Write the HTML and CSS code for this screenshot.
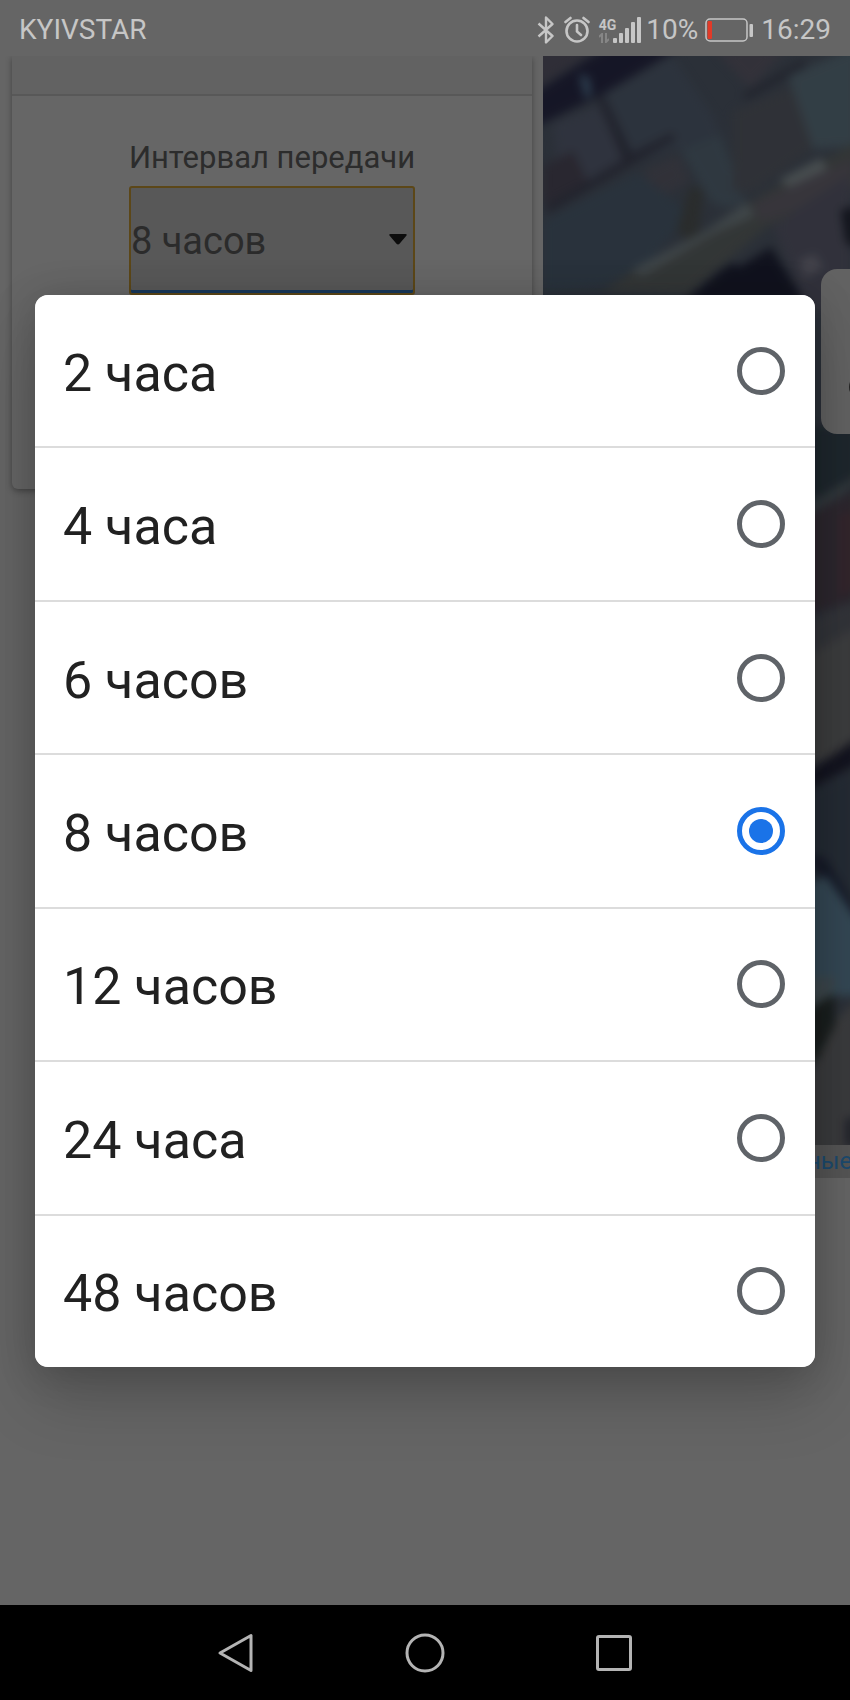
FILE: index.html
```html
<!DOCTYPE html>
<html lang="ru">
<head>
<meta charset="utf-8">
<meta name="viewport" content="width=device-width, initial-scale=1">
<title>Интервал передачи</title>
<link rel="stylesheet" href="styles.css">
</head>
<body>
<header class="status">
  <span class="carrier">KYIVSTAR</span>
  <div class="indicators">
    <svg class="bluetooth" width="18" height="28" viewBox="0 0 18 28" fill="none" stroke="currentColor" stroke-width="2.4" stroke-linejoin="round"><path d="M1.500 7.500 15.500 20 9 26.500V1.500L15.500 8 1.500 20.500"/></svg>
    <svg class="alarm" width="26" height="27" viewBox="0 0 26 27" fill="none" stroke="currentColor" stroke-width="2.600" stroke-linecap="round"><circle cx="13" cy="15" r="10.500"/><path d="M13 9v6.500l4 3.500M1.500 6 6.500 2M24.500 6l-5-4"/></svg>
    <div class="network">
      <span class="network-type">4G</span>
      <svg class="traffic" width="10" height="10" viewBox="0 0 10 10" fill="none" stroke="currentColor" stroke-width="2"><path d="M3 10V1L0 4M7 0v9l3-3"/></svg>
    </div>
    <svg class="signal" width="28" height="28" viewBox="0 0 28 28" fill="currentColor"><rect y="22" width="4" height="5" rx="1"/><rect x="6" y="17" width="4" height="10" rx="1"/><rect x="12" y="12" width="4" height="15" rx="1"/><rect x="18" y="6" width="4" height="21" rx="1"/><rect x="24" y="1" width="4" height="26" rx="1"/></svg>
    <span class="percent">10%</span>
    <svg class="battery" width="48" height="24" viewBox="0 0 48 24"><rect x="1" y="1" width="41" height="22" rx="4" fill="none" stroke="currentColor" stroke-width="1.500"/><rect x="2.500" y="3" width="4.500" height="18" rx="1" fill="#e23a28"/><rect x="44.500" y="6" width="3.500" height="13" rx="1" fill="currentColor"/></svg>
    <time class="clock">16:29</time>
  </div>
</header>

<main class="page">
  <section class="column">
    <form class="panel">
      <div class="panel-head"></div>
      <div class="panel-body">
        <div class="field">
          <label class="field-label" for="interval">Интервал передачи</label>
          <div class="select-wrap">
            <select class="select" id="interval"><option>8 часов</option></select>
            <svg class="caret" width="18" height="11" viewBox="0 0 18 11"><path d="M1.500 0h15c1.500 0 1.500 1 .8 1.800L10.500 9.700c-1 1-2 1-3 0L.7 1.800C0 1 0 0 1.500 0z" fill="#0c0c0c"/></svg>
          </div>
        </div>
      </div>
    </form>
  </section>

  <section class="map">
    <div class="map-view">
      <svg class="satellite" viewBox="0 0 307 1089" preserveAspectRatio="xMaxYMin slice">
        <defs><filter id="soft" x="-5%" y="-5%" width="110%" height="110%" color-interpolation-filters="sRGB"><feGaussianBlur stdDeviation="5"/></filter></defs>
        <rect width="307" height="1089" fill="#2b3038"/>
        <g filter="url(#soft)" opacity=".88">
          <path fill="#302e37" d="M-10-10H60L-10 34z"/>
          <path fill="#131324" d="M-10 38 55-4 65-10H140L60 38-10 72z"/>
          <path fill="#2d3f50" d="M36 18l10 3 3 17-7 5z"/>
          <path fill="#2d343e" d="M57 40 130 0l40 60 20 50-60-18-50 20z"/>
          <path fill="#30343f" d="M10 68 55 50l28 52-40 26L15 112z"/>
          <path fill="#29262f" d="M0 110 30 95l14 30L0 150z"/>
          <path fill="#20212b" d="M54 42l7-3 28 58 40-20 4 6L4 158v-9l76-45z"/>
          <path fill="#323239" d="M100 115l35-16 12 26-34 19z"/>
          <path fill="#29333d" d="M0 165l95-48 52 40-40 48-45 25-62 8z"/>
          <path fill="#303a42" d="M138 95l40-16 24 68-20 5-14-6z"/>
          <path fill="#34323a" d="M170-8h75l-38 40z"/>
          <path fill="#20222b" d="M200 38 260 4l3 6-60 34z"/>
          <path fill="#303237" d="M190 55l62-25 28 55-70 50-20 0z"/>
          <path fill="#344047" d="M245 20l70-30v100l-45 3z"/>
          <path fill="#2a2c2b" d="M147 130l13 4-6 60-20-20z"/>
          <path fill="#343736" d="M60 236l35-25 70-38 60-38 90-50v45l-90 40-80 68z"/>
          <path fill="#42494b" d="M88 214l76-40 40-28 8 14-42 18-70 42z"/>
          <path fill="#4c5253" d="M236 124l42-22 11 19-36 15z"/>
          <path fill="#39363c" d="M210 148l100-46v34l-92 30z"/>
          <path fill="#32323c" d="M230 170l77-50v135h-42z"/>
          <path fill="#46454d" d="M256 204l16-6 8 14-18 10z"/>
          <path fill="#0e0f1b" d="M140 246l36-30 14-9 6 4 32-20 34 55z"/>
          <path fill="#0e1018" d="M298 154l16-4v44l-11-8z"/>
          <path fill="#1d262c" d="M265 370h50v62l-50 12z"/>
          <path fill="#353c3f" d="M265 448l50-29v8l-50 32z"/>
          <path fill="#2d262d" d="M265 460l50-28v112l-50 15z"/>
          <path fill="#35242b" d="M296 460l20-8v80l-20 8z"/>
          <path fill="#34353a" d="M265 565l50-22v50l-50 10z"/>
          <path fill="#3f3f3f" d="M265 600l50-30v120l-50 20z"/>
          <path fill="#10101c" d="M265 716l50-34v26l-50 26z"/>
          <path fill="#242b34" d="M265 735l50-22v170h-50z"/>
          <path fill="#131726" d="M262 797l20 5 33 53v22z"/>
          <path fill="#364b58" d="M265 828l18-8 33 46v74h-50z"/>
          <path fill="#3f4a4e" d="M265 922h28l-10 28-18 8z"/>
          <path fill="#171c1a" d="M265 953l26-15 1 45-10 28-19-10z"/>
          <path fill="#3d3d3e" d="M265 1022l30-60 20-20v157h-50z"/>
          <path fill="#22232b" d="M302 1062h14v28h-14z"/>
        </g>
      </svg>
      <button class="map-button" type="button" aria-label="Слои"><span class="map-dot"></span></button>
    </div>
    <div class="attribution"><a class="attribution-link" href="#">ные</a></div>
  </section>

  <div class="overlay">
    <div class="dialog" role="radiogroup" aria-label="Интервал передачи">
      <label class="option"><span>2 часа</span><input class="radio" type="radio" name="hours"></label>
      <label class="option"><span>4 часа</span><input class="radio" type="radio" name="hours"></label>
      <label class="option"><span>6 часов</span><input class="radio" type="radio" name="hours"></label>
      <label class="option"><span>8 часов</span><input class="radio" type="radio" name="hours" checked></label>
      <label class="option"><span>12 часов</span><input class="radio" type="radio" name="hours"></label>
      <label class="option"><span>24 часа</span><input class="radio" type="radio" name="hours"></label>
      <label class="option"><span>48 часов</span><input class="radio" type="radio" name="hours"></label>
    </div>
  </div>
</main>

<nav class="navbar">
  <button class="nav-button" type="button" aria-label="Назад"><svg width="40" height="40" viewBox="0 0 40 40" fill="none" stroke="currentColor" stroke-width="3" stroke-linejoin="round"><path d="M35 2.500v35L4 20z"/></svg></button>
  <button class="nav-button" type="button" aria-label="Домой"><svg width="40" height="40" viewBox="0 0 40 40" fill="none" stroke="currentColor" stroke-width="3"><circle cx="20" cy="20" r="18"/></svg></button>
  <button class="nav-button" type="button" aria-label="Недавние"><svg width="40" height="40" viewBox="0 0 40 40" fill="none" stroke="currentColor" stroke-width="3"><rect x="3.500" y="3.500" width="33" height="33" rx="1.500"/></svg></button>
</nav>
</body>
</html>
```

FILE: styles.css
```css
* { box-sizing: border-box; }

body {
  margin: 0;
  min-height: 100vh;
  display: flex;
  flex-direction: column;
  background: #656565;
  font-family: Roboto, "Noto Sans", sans-serif;
}

button {
  padding: 0;
  border: 0;
  background: none;
  color: inherit;
}

.status {
  height: 56px;
  padding: 3px 19px 0;
  display: flex;
  align-items: center;
  justify-content: space-between;
  color: #c6c6c6;
  font-size: 28px;
  line-height: 32px;
}

.indicators { display: flex; align-items: center; }
.alarm { margin-left: 9px; }
.network {
  margin-left: 9px;
  display: flex;
  flex-direction: column;
  align-items: flex-start;
}
.network-type {
  font-size: 14px;
  line-height: 16px;
  font-weight: 700;
}
.traffic { color: #868686; }
.signal { margin: 0 5px 0 -3px; }
.battery { margin: 0 8px 0 7px; }

.page {
  flex: 1;
  position: relative;
  display: grid;
  grid-template-columns: minmax(0, 543fr) minmax(0, 307fr);
  align-items: start;
  overflow: hidden;
}

.column { padding: 0 11px 0 12px; }
.panel {
  border-radius: 0 0 6px 6px;
  background: #666;
  box-shadow: 0 2px 6px rgba(0, 0, 0, .35);
}
.panel-head {
  height: 40px;
  background: #626262;
  border-bottom: 2px solid #585858;
}
.panel-body {
  padding: 42px 24px 194px;
  display: flex;
  justify-content: center;
}
.field {
  display: flex;
  flex-direction: column;
  gap: 8px;
}
.field-label {
  color: #2c2c2c;
  font-size: 31px;
  line-height: 40px;
}
.select-wrap { position: relative; }
.select {
  display: block;
  width: 100%;
  height: 109px;
  padding: 0;
  appearance: none;
  border: 2px solid #5c4718;
  border-radius: 3px;
  background: #585858;
  box-shadow: inset 0 -3px #18395a;
  color: #2b2b2b;
  font: 38px/44px Roboto, "Noto Sans", sans-serif;
}
.caret {
  position: absolute;
  right: 8px;
  top: 48px;
}

.map-view {
  position: relative;
  overflow: hidden;
}
.satellite {
  display: block;
  width: 100%;
  height: 1089px;
}
.map-button {
  position: absolute;
  top: 213px;
  right: -80px;
  width: 109px;
  height: 165px;
  padding-left: 28px;
  display: flex;
  align-items: center;
  border-radius: 16px;
  background: #626262;
}
.map-dot {
  width: 24px;
  height: 24px;
  margin-top: 70px;
  border-radius: 50%;
  background: #222;
}
.attribution {
  padding-left: 264px;
  overflow: hidden;
  background: #555;
  font-size: 24px;
  line-height: 33px;
}
.attribution-link {
  color: #1c4a6e;
  text-decoration: none;
}

.overlay {
  position: absolute;
  inset: 0;
  padding: 239px 35px 238px;
  display: flex;
}
.dialog {
  flex: 1;
  display: flex;
  flex-direction: column;
  gap: 2px;
  overflow: hidden;
  border-radius: 13px;
  background: #dcdcdc;
  box-shadow: 0 32px 64px rgba(0, 0, 0, .18), 0 4px 40px rgba(0, 0, 0, .18);
}
.option {
  flex: 1;
  padding: 0 30px 0 28px;
  display: flex;
  align-items: center;
  justify-content: space-between;
  background: #fff;
  color: #212121;
  font-size: 52px;
  line-height: 64px;
}
.option span { padding-top: 6px; }
.radio {
  appearance: none;
  width: 48px;
  height: 48px;
  margin: 0;
  display: grid;
  place-items: center;
  border: 5px solid #5f6368;
  border-radius: 50%;
}
.radio:checked { border-color: #1a73e8; }
.radio:checked::before {
  content: "";
  width: 24px;
  height: 24px;
  border-radius: 50%;
  background: #1a73e8;
}

.navbar {
  height: 95px;
  display: flex;
  align-items: center;
  justify-content: center;
  gap: 149px;
  background: #000;
  color: #b4b4b4;
}
.nav-button {
  width: 40px;
  height: 40px;
}
```
